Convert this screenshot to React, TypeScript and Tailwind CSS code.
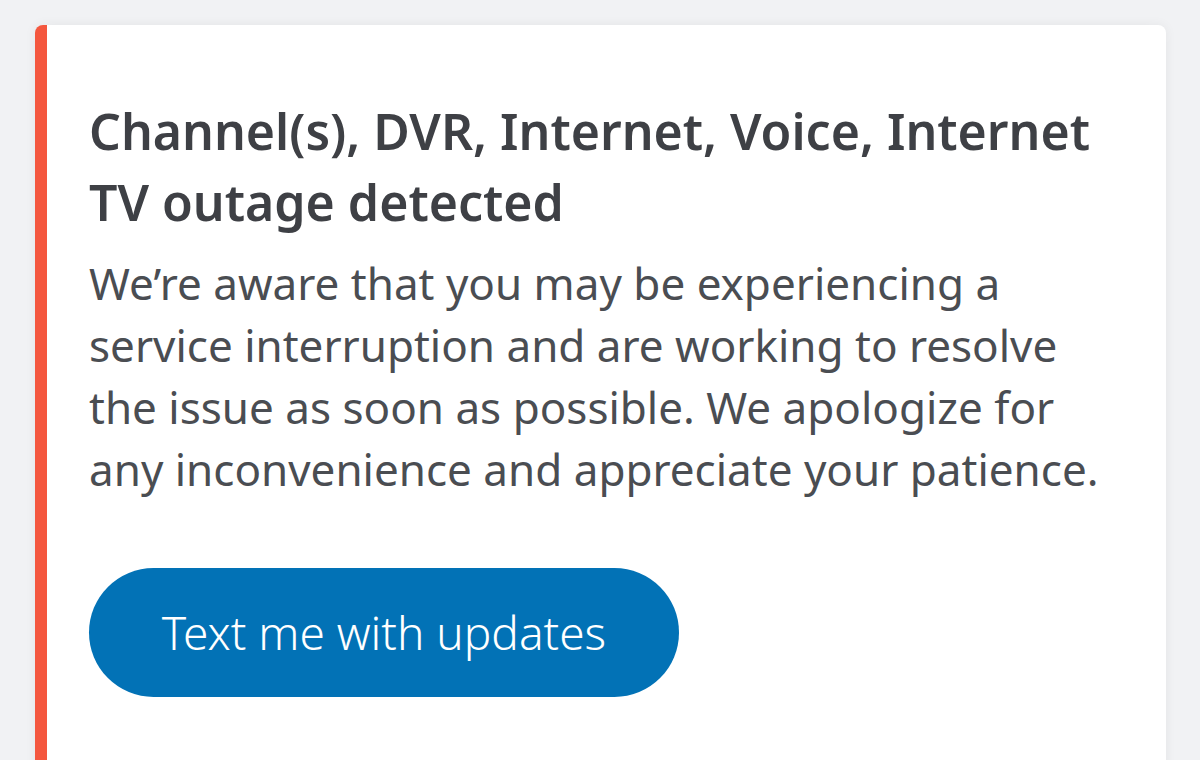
export default function App() {
  return (
    <div className="min-h-[760px] h-[760px] overflow-hidden bg-[#f1f2f4] pl-[35px] pr-[34px] pt-[25px] font-['Noto_Sans',sans-serif]">
      <div className="h-[800px] rounded-lg border-l-[12px] border-[#f4573e] bg-white pl-[42px] pr-[50px] pt-[71px] shadow-[0_0_12px_rgba(0,0,0,0.06)]">
        <h1 className="text-[50px] font-semibold leading-[71px] text-[#3e4045]">
          Channel(s), DVR, Internet, Voice, Internet TV outage detected
        </h1>
        <p className="mt-[14px] text-[44px] leading-[62px] text-[#4a4d52]">
          We’re aware that you may be experiencing a service interruption and are working to resolve the issue as soon as possible. We apologize for any inconvenience and appreciate your patience.
        </p>
        <button
          type="button"
          className="mt-[68px] flex h-[129px] w-[590px] items-center justify-center rounded-full bg-[#0272b6] text-[46px] font-light text-white"
        >
          Text me with updates
        </button>
      </div>
    </div>
  );
}
